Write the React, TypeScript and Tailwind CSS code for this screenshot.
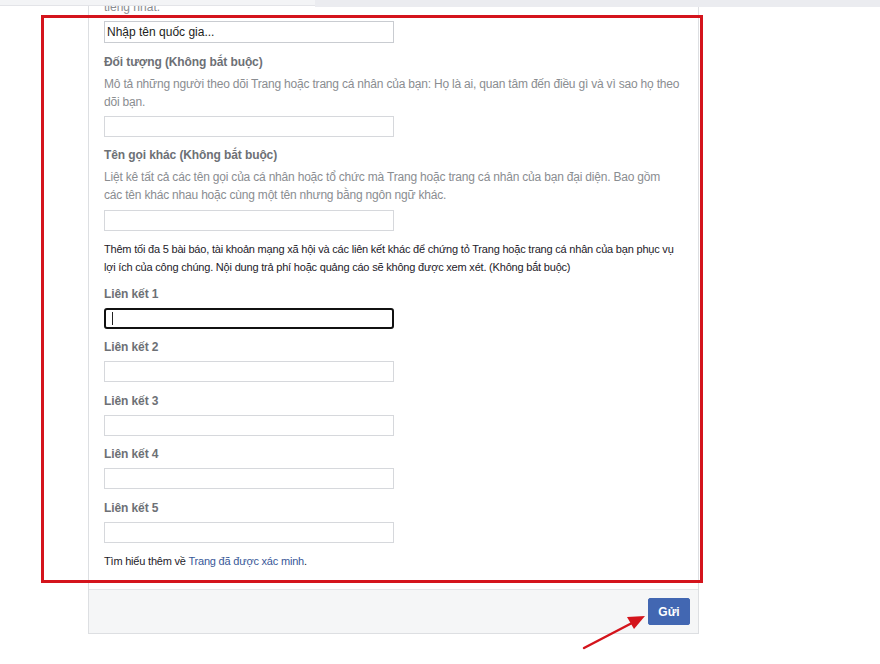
import React from "react";

const font = { fontFamily: '"Liberation Sans", Arial, sans-serif' };

function Label({ children, className = "" }: { children: React.ReactNode; className?: string }) {
  return <div className={`text-[12px] leading-[18px] font-bold text-[#6d7075] tracking-[-0.1px] ${className}`}>{children}</div>;
}

function Input({ className = "" }: { className?: string }) {
  return <div className={`w-[290px] h-[21px] border border-[#d6d8dc] bg-white ${className}`} />;
}

export default function App() {
  const links = [
    { n: 1, mt: "mt-[9px]" },
    { n: 2, mt: "mt-[9px]" },
    { n: 3, mt: "mt-[10px]" },
    { n: 4, mt: "mt-[9px]" },
    { n: 5, mt: "mt-[10px]" },
  ];
  return (
    <div className="relative w-[880px] h-[664px] bg-white overflow-hidden" style={font}>
      {/* top band overlay */}
      <div className="absolute left-0 top-0 w-[880px] h-[7px] z-10 flex">
        <div className="w-[315px] h-[6px] bg-[#f3f4f6] border-b border-[#e3e4e8]" />
        <div className="flex-1 h-[7px] bg-[#ebecf0]" />
      </div>

      <div className="ml-[88px] w-[611px] border-x border-b border-[#dddfe2] bg-white">
        <div className="pl-[15px] pr-[6px] pb-[19px]">
          <div className="mt-[-2px] text-[12px] leading-[18px] text-[#8a8d91]">tiếng nhất.</div>
          <div className="mt-[5px] w-[290px] h-[22px] border border-[#c9ccd1] flex items-center px-[2px] text-[12px] text-[#1c1e21]">
            Nhập tên quốc gia...
          </div>

          <Label className="mt-[10px]">Đối tượng (Không bắt buộc)</Label>
          <div className="mt-[4px] text-[12px] leading-[18px] text-[#8a8d91] tracking-[-0.2px]">
            Mô tả những người theo dõi Trang hoặc trang cá nhân của bạn: Họ là ai, quan tâm đến điều gì và vì sao họ theo
            <br />
            dõi bạn.
          </div>
          <Input className="mt-[5px] h-[20px]" />

          <Label className="mt-[9px]">Tên gọi khác (Không bắt buộc)</Label>
          <div className="mt-[4px] text-[12px] leading-[18px] text-[#8a8d91] tracking-[-0.2px]">
            Liệt kê tất cả các tên gọi của cá nhân hoặc tổ chức mà Trang hoặc trang cá nhân của bạn đại diện. Bao gồm
            <br />
            các tên khác nhau hoặc cùng một tên nhưng bằng ngôn ngữ khác.
          </div>
          <Input className="mt-[6px] h-[20px]" />

          <div className="mt-[9px] text-[11px] leading-[18px] text-[#1d2129] tracking-[-0.2px]">
            Thêm tối đa 5 bài báo, tài khoản mạng xã hội và các liên kết khác để chứng tỏ Trang hoặc trang cá nhân của bạn phục vụ
            <br />
            lợi ích của công chúng. Nội dung trả phí hoặc quảng cáo sẽ không được xem xét. (Không bắt buộc)
          </div>

          {links.map((l) => (
            <div key={l.n}>
              <Label className={l.mt}>Liên kết {l.n}</Label>
              {l.n === 1 ? (
                <div className="mt-[5px] w-[290px] h-[21px] border-2 border-[#111] rounded-[3px] flex items-center pl-[6px]">
                  <div className="w-px h-[13px] bg-[#222]" />
                </div>
              ) : (
                <Input className="mt-[5px]" />
              )}
            </div>
          ))}

          <div className="mt-[9px] text-[11px] leading-[18px] text-[#1d2129] tracking-[-0.2px]">
            Tìm hiểu thêm về <span className="text-[#385898]">Trang đã được xác minh</span>.
          </div>
        </div>

        <div className="h-[44px] bg-[#f5f6f7] border-t border-[#e5e6e9] flex items-center justify-end pr-[8px]">
          <div className="w-[42px] h-[27px] rounded-[2px] bg-[#4267b2] border border-[#4267b2] flex items-center justify-center text-white text-[12px] font-bold">
            Gửi
          </div>
        </div>
      </div>

      {/* red highlight box */}
      <div className="absolute left-[41px] top-[15px] w-[662px] h-[568px] border-[3px] border-[#d4141c] z-20 pointer-events-none" />

      {/* red arrow */}
      <svg className="absolute left-0 top-0 z-20" width="880" height="664">
        <line x1="584" y1="648" x2="632" y2="623" stroke="#d4141c" strokeWidth="2.5" strokeLinecap="round" />
        <polygon points="645,616 627,617 634,629" fill="#d4141c" />
      </svg>
    </div>
  );
}
